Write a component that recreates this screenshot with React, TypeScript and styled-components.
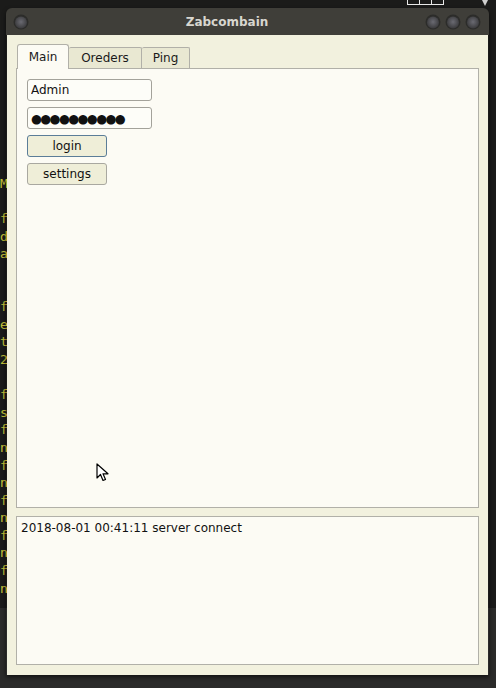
import styled, { createGlobalStyle } from 'styled-components'

const GlobalStyle = createGlobalStyle`
  html, body {
    margin: 0;
    padding: 0;
    background: #1b1b1a;
  }
  body {
    font-family: 'DejaVu Sans', 'Liberation Sans', sans-serif;
  }
`

const terminalLines = [
  'M', '', 'f', 'd', 'a', '', '', 'f', 'e', 't', '2', '',
  'f', 's', 'f', 'n', 'f', 'n', 'f', 'n', 'f', 'n', 'f', 'n',
]

const tabs = [
  { label: 'Main', width: 52 },
  { label: 'Oreders', width: 73 },
  { label: 'Ping', width: 48 },
]

function WindowButton() {
  return (
    <svg width="16" height="16" viewBox="0 0 16 16">
      <defs>
        <radialGradient id="btnFill" cx="50%" cy="45%" r="55%">
          <stop offset="0%" stopColor="#6a6a72" />
          <stop offset="100%" stopColor="#3a3a3c" />
        </radialGradient>
      </defs>
      <circle cx="8" cy="8" r="7.5" fill="#2c2c2a" />
      <circle cx="8" cy="8.5" r="6" fill="url(#btnFill)" />
    </svg>
  )
}

function Cursor() {
  return (
    <svg width="14" height="20" viewBox="0 0 14 20">
      <path
        d="M1 1 L1 15 L4.5 11.5 L7 17.5 L9.5 16.5 L7 10.8 L12 10.8 Z"
        fill="#fff"
        stroke="#000"
        strokeWidth="1.2"
        strokeLinejoin="round"
      />
    </svg>
  )
}

function App() {
  return (
    <>
      <GlobalStyle />
      <Desktop>
        <TopPanel>
          <TrayBoxes>
            <TrayCell />
            <TrayCell />
            <TrayCell />
          </TrayBoxes>
          <TrayArrow />
        </TopPanel>
        <Terminal>
          {terminalLines.map((line, i) => (
            <TermLine key={i}>{line || '\u00a0'}</TermLine>
          ))}
        </Terminal>
        <Window>
          <TitleBar>
            <WindowButton />
            <Title>Zabcombain</Title>
            <TitleButtons>
              <WindowButton />
              <WindowButton />
              <WindowButton />
            </TitleButtons>
          </TitleBar>
          <Body>
            <TabWidget>
              <TabBar>
                {tabs.map((tab) => (
                  <Tab key={tab.label} $width={tab.width} data-active={tab.label === 'Main'}>
                    {tab.label}
                  </Tab>
                ))}
              </TabBar>
              <TabPanel>
                <Input defaultValue="Admin" />
                <PasswordInput defaultValue="●●●●●●●●●●" />
                <Button data-focused="true">login</Button>
                <Button>settings</Button>
              </TabPanel>
            </TabWidget>
            <Log>2018-08-01 00:41:11 server connect</Log>
          </Body>
        </Window>
        <Pointer>
          <Cursor />
        </Pointer>
      </Desktop>
    </>
  )
}

const Desktop = styled.div`
  position: relative;
  width: 496px;
  height: 688px;
  overflow: hidden;
  background: linear-gradient(to bottom, #1b1b1a 0, #1b1b1a 608px, #2b2b2a 608px);
  padding: 8px 0 0 6px;
  box-sizing: border-box;
`

const TopPanel = styled.div`
  position: absolute;
  top: 0;
  left: 0;
  right: 0;
  height: 8px;
`

const TrayBoxes = styled.div`
  position: absolute;
  left: 407px;
  top: -1px;
  display: flex;
  height: 4px;
  border: 1px solid #e8e8e8;
`

const TrayCell = styled.div`
  width: 11px;
  border-right: 1px solid #e8e8e8;
  &:last-child {
    border-right: none;
  }
`

const TrayArrow = styled.div`
  position: absolute;
  left: 482px;
  top: 0;
  width: 0;
  height: 0;
  border-left: 3px solid transparent;
  border-right: 3px solid transparent;
  border-top: 6px solid #cfcfcf;
`

const Terminal = styled.div`
  position: absolute;
  left: 0;
  top: 175px;
  font-family: 'DejaVu Sans Mono', 'Liberation Mono', monospace;
  font-size: 13px;
  line-height: 17.6px;
  color: #c4c23a;
`

const TermLine = styled.div``

const Window = styled.div`
  position: relative;
  width: 483px;
  display: flex;
  flex-direction: column;
  box-shadow: 0 2px 4px rgba(0, 0, 0, 0.6);
  border-radius: 6px 6px 0 0;
`

const TitleBar = styled.div`
  height: 27px;
  display: flex;
  align-items: center;
  padding: 0 8px 0 7px;
  background: #3f3e39;
  border-radius: 6px 6px 0 0;
`

const Title = styled.div`
  flex: 1;
  text-align: center;
  color: #d8d6cf;
  font-weight: bold;
  font-size: 12px;
`

const TitleButtons = styled.div`
  display: flex;
  gap: 4px;
`

const Body = styled.div`
  margin: 0 1px 0 1px;
  height: 640px;
  background: #f2f1de;
  padding: 9px 9px 10px 9px;
  display: flex;
  flex-direction: column;
  gap: 8px;
  box-sizing: border-box;
`

const TabWidget = styled.div`
  height: 464px;
  display: flex;
  flex-direction: column;
`

const TabBar = styled.div`
  display: flex;
  align-items: flex-end;
  padding-left: 1px;
  height: 24px;
  position: relative;
  z-index: 1;
`

const Tab = styled.div<{ $width: number }>`
  width: ${({ $width }) => $width}px;
  box-sizing: border-box;
  height: 21px;
  display: flex;
  align-items: center;
  justify-content: center;
  font-size: 12px;
  color: #1a1a1a;
  background: #e9e8d2;
  border: 1px solid #b1b0a8;
  border-bottom: none;
  border-left: none;
  border-radius: 2px 2px 0 0;
  &[data-active='true'] {
    height: 25px;
    margin-bottom: -1px;
    background: #fcfbf4;
    border-left: 1px solid #b1b0a8;
    border-radius: 3px 3px 0 0;
  }
`

const TabPanel = styled.div`
  flex: 1;
  border: 1px solid #b1b0a8;
  background: #fcfbf4;
  padding: 10px;
  display: flex;
  flex-direction: column;
  align-items: flex-start;
  gap: 6px;
`

const Input = styled.input`
  width: 125px;
  height: 22px;
  box-sizing: border-box;
  border: 1px solid #a3a29a;
  border-radius: 3px;
  background: #fdfdf8;
  font-family: 'DejaVu Sans', sans-serif;
  font-size: 12px;
  color: #111;
  padding: 0 3px;
  outline: none;
`

const PasswordInput = styled(Input)`
  letter-spacing: -1.6px;
  font-size: 12.5px;
`

const Button = styled.button`
  width: 80px;
  height: 22px;
  box-sizing: border-box;
  border: 1px solid #a9a8a0;
  border-radius: 3px;
  background: #efeed8;
  font-family: 'DejaVu Sans', sans-serif;
  font-size: 12px;
  color: #111;
  padding: 0;
  &[data-focused='true'] {
    border-color: #5b7d98;
  }
`

const Log = styled.div`
  height: 149px;
  box-sizing: border-box;
  border: 1px solid #b1b0a8;
  background: #fcfbf4;
  padding: 4px 4px;
  font-size: 12px;
  color: #111;
`

const Pointer = styled.div`
  position: absolute;
  left: 96px;
  top: 463px;
  line-height: 0;
`

export default App
